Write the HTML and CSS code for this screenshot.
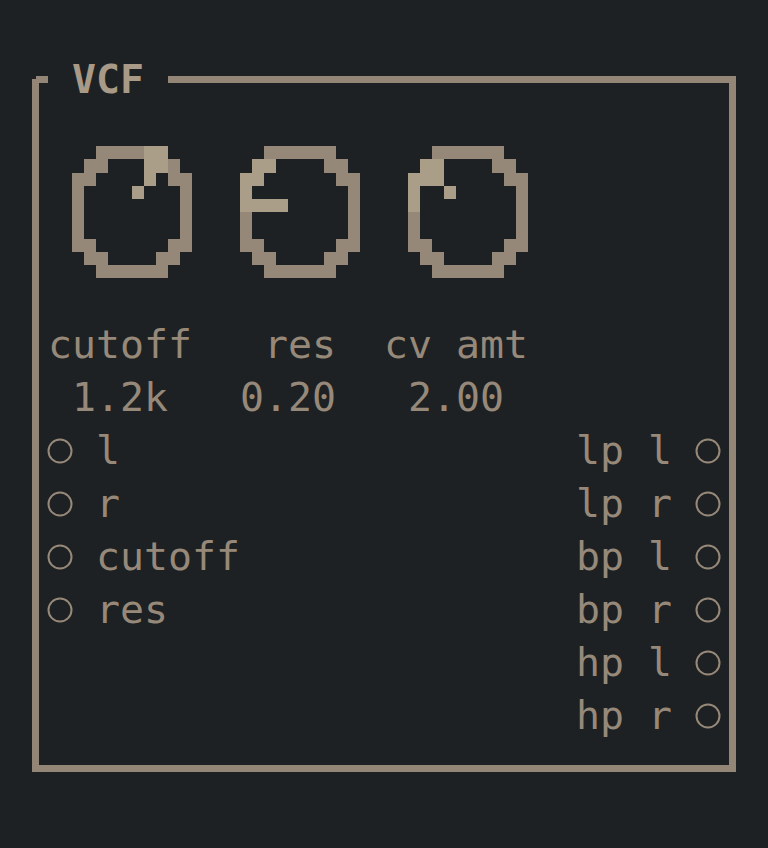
FILE: index.html
```html
<!DOCTYPE html>
<html>
<head>
<meta charset="utf-8">
<title>VCF</title>
<link rel="stylesheet" href="styles.css">
</head>
<body>
<div class="term">
  <div class="frame"></div>
  <div class="title"> VCF </div>

  <svg class="knob knob-1" viewBox="0 0 10 10" preserveAspectRatio="none" shape-rendering="crispEdges">
    <path class="ring" d="M2 0h6v1H2zM1 1h2v1H1zM7 1h2v1H7zM0 2h2v1H0zM8 2h2v1H8zM0 3h1v4H0zM9 3h1v4H9zM0 7h2v1H0zM8 7h2v1H8zM1 8h2v1H1zM7 8h2v1H7zM2 9h6v1H2z"/>
    <path class="lit" d="M6 0h2v2H6zM6 2h1v1H6zM5 3h1v1H5z"/>
  </svg>
  <svg class="knob knob-2" viewBox="0 0 10 10" preserveAspectRatio="none" shape-rendering="crispEdges">
    <path class="ring" d="M2 0h6v1H2zM1 1h2v1H1zM7 1h2v1H7zM0 2h2v1H0zM8 2h2v1H8zM0 3h1v4H0zM9 3h1v4H9zM0 7h2v1H0zM8 7h2v1H8zM1 8h2v1H1zM7 8h2v1H7zM2 9h6v1H2z"/>
    <path class="lit" d="M1 1h2v1H1zM0 2h2v1H0zM0 3h1v1H0zM0 4h4v1H0z"/>
  </svg>
  <svg class="knob knob-3" viewBox="0 0 10 10" preserveAspectRatio="none" shape-rendering="crispEdges">
    <path class="ring" d="M2 0h6v1H2zM1 1h2v1H1zM7 1h2v1H7zM0 2h2v1H0zM8 2h2v1H8zM0 3h1v4H0zM9 3h1v4H9zM0 7h2v1H0zM8 7h2v1H8zM1 8h2v1H1zM7 8h2v1H7zM2 9h6v1H2z"/>
    <path class="lit" d="M1 1h2v1H1zM0 2h3v1H0zM0 3h1v2H0zM3 3h1v1H3z"/>
  </svg>

  <span class="label label-1">cutoff</span>
  <span class="label label-2">res</span>
  <span class="label label-3">cv amt</span>

  <span class="value value-1">1.2k</span>
  <span class="value value-2">0.20</span>
  <span class="value value-3">2.00</span>

  <span class="jack in r9"><svg viewBox="0 0 24 24"><circle cx="12" cy="12" r="11.5"/></svg></span>
  <span class="port-in r9">l</span>
  <span class="jack in r10"><svg viewBox="0 0 24 24"><circle cx="12" cy="12" r="11.5"/></svg></span>
  <span class="port-in r10">r</span>
  <span class="jack in r11"><svg viewBox="0 0 24 24"><circle cx="12" cy="12" r="11.5"/></svg></span>
  <span class="port-in r11">cutoff</span>
  <span class="jack in r12"><svg viewBox="0 0 24 24"><circle cx="12" cy="12" r="11.5"/></svg></span>
  <span class="port-in r12">res</span>

  <span class="port-out r9">lp l</span>
  <span class="jack out r9"><svg viewBox="0 0 24 24"><circle cx="12" cy="12" r="11.5"/></svg></span>
  <span class="port-out r10">lp r</span>
  <span class="jack out r10"><svg viewBox="0 0 24 24"><circle cx="12" cy="12" r="11.5"/></svg></span>
  <span class="port-out r11">bp l</span>
  <span class="jack out r11"><svg viewBox="0 0 24 24"><circle cx="12" cy="12" r="11.5"/></svg></span>
  <span class="port-out r12">bp r</span>
  <span class="jack out r12"><svg viewBox="0 0 24 24"><circle cx="12" cy="12" r="11.5"/></svg></span>
  <span class="port-out r13">hp l</span>
  <span class="jack out r13"><svg viewBox="0 0 24 24"><circle cx="12" cy="12" r="11.5"/></svg></span>
  <span class="port-out r14">hp r</span>
  <span class="jack out r14"><svg viewBox="0 0 24 24"><circle cx="12" cy="12" r="11.5"/></svg></span>
</div>
</body>
</html>
```

FILE: styles.css
```css
html, body {
  margin: 0;
  padding: 0;
  background: #1e2123;
}

.term {
  display: grid;
  grid-template-columns: repeat(32, 24px);
  grid-template-rows: repeat(16, 53px);
  width: 768px;
  height: 848px;
  font-family: "DejaVu Sans Mono", monospace;
  font-size: 39.86px;
  line-height: 53px;
  color: #978979;
  white-space: pre;
}

.frame {
  grid-column: 2 / 32;
  grid-row: 2 / 16;
  margin: 23px 8.5px 23px 8px;
  border: 7px solid #948676;
  position: relative;
}
.frame::before {
  content: "";
  position: absolute;
  top: -7px;
  left: -7px;
  width: 4px;
  height: 3px;
  background: #1e2123;
}

.title {
  grid-column: 3 / 8;
  grid-row: 2;
  background: #1e2123;
  font-weight: bold;
  color: #a89a86;
  z-index: 1;
}

.knob {
  grid-row: 3 / 7;
  align-self: start;
  margin-top: 39.75px;
  width: 120px;
  height: 132.5px;
}
.knob-1 { grid-column: 4 / 9; }
.knob-2 { grid-column: 11 / 16; }
.knob-3 { grid-column: 18 / 23; }
.knob .ring { fill: #968878; }
.knob .lit { fill: #ab9e88; }

.label { grid-row: 7; }
.label-1 { grid-column: 3 / span 6; }
.label-2 { grid-column: 12 / span 3; }
.label-3 { grid-column: 17 / span 6; }

.value { grid-row: 8; }
.value-1 { grid-column: 4 / span 4; }
.value-2 { grid-column: 11 / span 4; }
.value-3 { grid-column: 18 / span 4; }

.jack {
  display: flex;
  align-items: center;
  justify-content: center;
}
.jack svg {
  width: 24px;
  height: 24px;
  overflow: visible;
}
.jack circle {
  fill: none;
  stroke: #978979;
  stroke-width: 2;
}
.jack.in { grid-column: 3; }
.jack.out { grid-column: 30; }

.port-in { grid-column: 5 / span 6; }
.port-out { grid-column: 25 / span 4; }

.r9 { grid-row: 9; }
.r10 { grid-row: 10; }
.r11 { grid-row: 11; }
.r12 { grid-row: 12; }
.r13 { grid-row: 13; }
.r14 { grid-row: 14; }
```
